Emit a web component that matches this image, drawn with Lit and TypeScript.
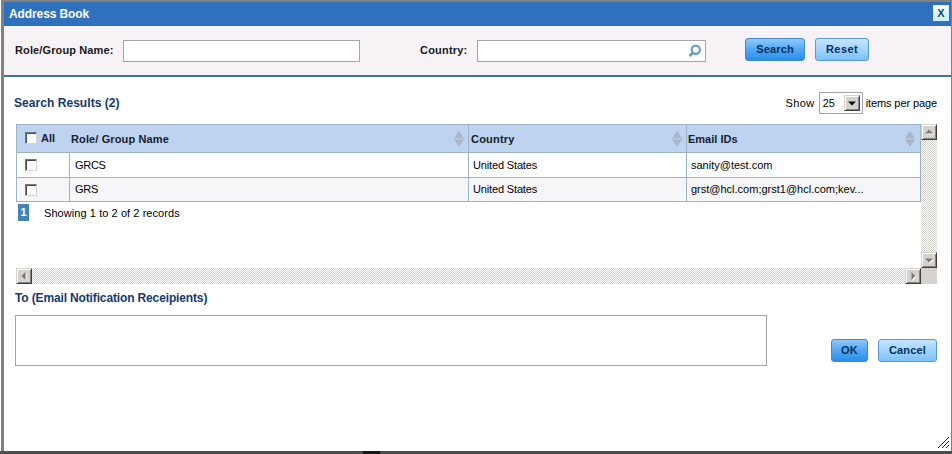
import { LitElement, html, css, svg } from "lit";
import { customElement, property } from "lit/decorators.js";

interface Row {
  name: string;
  country: string;
  email: string;
}

const ROWS: Row[] = [
  { name: "GRCS", country: "United States", email: "sanity@test.com" },
  { name: "GRS", country: "United States", email: "grst@hcl.com;grst1@hcl.com;kev..." },
];

const ARROWS: Record<string, string> = {
  up: "3.5,9 11.5,9 7.5,5",
  down: "3.5,6 11.5,6 7.5,10",
  left: "9,3.5 9,11.5 5,7.5",
  right: "6,3.5 6,11.5 10,7.5",
};

@customElement("scroll-arrow")
class ScrollArrow extends LitElement {
  @property() dir = "up";
  static styles = css`
    :host {
      display: block;
      flex: none;
      box-sizing: border-box;
      width: 16px;
      height: 16px;
      background: #d6d3ce;
      border: 1px solid;
      border-color: #d6d3ce #404040 #404040 #d6d3ce;
      box-shadow: inset 1px 1px #fff, inset -1px -1px #848284;
    }
    svg {
      display: block;
      width: 14px;
      height: 14px;
    }
    .lit { fill: #fff; }
    .face { fill: #7d7a78; }
  `;
  render() {
    return html`<svg viewBox="0.5 0.5 14 14">
      ${svg`<polygon class="lit" points=${ARROWS[this.dir]} transform="translate(1 1)"></polygon>
      <polygon class="face" points=${ARROWS[this.dir]}></polygon>`}
    </svg>`;
  }
}

@customElement("check-box")
class CheckBox extends LitElement {
  static styles = css`
    :host {
      display: block;
      flex: none;
      box-sizing: border-box;
      width: 12px;
      height: 12px;
      background: #fff;
      border: 1px solid;
      border-color: #7b7977 #d6d3ce #d6d3ce #7b7977;
      box-shadow: inset 1px 1px #4a4a4a;
    }
  `;
  render() {
    return html``;
  }
}

@customElement("app-root")
class AppRoot extends LitElement {
  static styles = css`
    :host {
      display: block;
      width: 952px;
      height: 454px;
      overflow: hidden;
      font: 11px/14px "Liberation Sans", Arial, sans-serif;
      color: #000;
      background: #fff;
      white-space: nowrap;
    }
    * { box-sizing: border-box; }
    .dialog {
      position: relative;
      height: 451px;
      margin-left: 1px;
      border: solid #808080;
      border-width: 2px 1px 0 3px;
      display: flex;
      flex-direction: column;
    }
    .title {
      height: 24px;
      flex: none;
      background: #3071be;
      color: #fff;
      font-weight: bold;
      font-size: 12px;
      display: flex;
      align-items: center;
      justify-content: space-between;
      padding: 0 2px 0 5px;
    }
    .title-text { letter-spacing: -0.1px; }
    .close {
      width: 16px;
      height: 16px;
      margin-bottom: 2px;
      background: linear-gradient(#fafdff, #c9ebf8);
      border: 1px solid #d3f0ff;
      color: #0b4f63;
      font-size: 11px;
      line-height: 15px;
      text-align: center;
    }
    .filters {
      height: 51px;
      flex: none;
      background: #f6f2f5;
      border-bottom: 2px solid #44719a;
      display: flex;
      align-items: center;
      padding: 0 0 0 11px;
      font-weight: bold;
      color: #1b191c;
    }
    .label { flex: none; padding-bottom: 2px; letter-spacing: 0.12px; }
    .role { width: 108px; }
    .country { width: 57px; margin-left: 60px; letter-spacing: 0.2px; }
    .input {
      width: 237px;
      height: 22px;
      background: #fff;
      border: 1px solid #a3a3b5;
      flex: none;
    }
    .lookup {
      width: 229px;
      display: flex;
      align-items: center;
      justify-content: flex-end;
      padding-right: 3px;
    }
    .glass { width: 14px; height: 14px; display: block; }
    .btn {
      flex: none;
      height: 23px;
      border: 1px solid #5a9bd0;
      border-radius: 3px;
      font-weight: bold;
      line-height: 21px;
      text-align: center;
      color: #02305f;
      background: linear-gradient(#c4e4ff, #a3d3ff 50%, #7cc0fc);
      letter-spacing: 0.15px;
    }
    .primary {
      border-color: #4489c7;
      background: linear-gradient(#8fc8fc, #53a7f3 50%, #2b8eea);
    }
    .search { width: 60px; margin: 0 10px 2px 39px; }
    .reset { width: 54px; margin-bottom: 2px; letter-spacing: 0.4px; }
    .ok { width: 37px; margin-right: 10px; }
    .cancel { width: 59px; }
    .body { padding: 15px 14px 0 12px; }
    .bar {
      height: 22px;
      display: flex;
      align-items: center;
      margin-left: -2px;
    }
    .heading { font-weight: bold; color: #14396f; font-size: 12px; }
    .h1 { flex: 1; padding-bottom: 1px; letter-spacing: 0.05px; }
    .show { letter-spacing: 0.4px; }
    .select {
      width: 44px;
      height: 22px;
      border: 1px solid #a3a3b5;
      margin: 0 3px 0 4px;
      padding: 0 2px 0 3px;
      display: flex;
      align-items: center;
      justify-content: space-between;
    }
    .per { letter-spacing: -0.1px; }
    .drop {
      width: 16px;
      height: 16px;
      border: 1px solid;
      border-color: #d6d3ce #404040 #404040 #d6d3ce;
      background: #d6d3ce;
      box-shadow: inset 1px 1px #fff, inset -1px -1px #848284;
      display: block;
    }
    .pane {
      margin-top: 10px;
      width: 921px;
      height: 160px;
      display: grid;
      grid-template: 144px 16px / 905px 16px;
    }
    .row {
      display: grid;
      grid-template-columns: 52px 399px 218px 234px;
      height: 24px;
      border: solid #9db3c6;
      border-width: 0 1px 1px 1px;
    }
    .row > div {
      display: flex;
      align-items: center;
      padding: 0 0 1px 5px;
      border-left: 1px solid #9db3c6;
    }
    .row > div:nth-child(2) { letter-spacing: -0.3px; }
    .row > div:nth-child(3) { padding-left: 4px; letter-spacing: -0.15px; }
    .row > div:first-child { border-left: 0; padding: 0 0 0 8px; }
    .row > .mail { padding-left: 4px; }
    .row.first { height: 25px; }
    .row.first > div { padding-bottom: 0; }
    .row.alt { background: #f6f6f8; }
    .row.head {
      height: 29px;
      border-top-width: 1px;
      background: #bdd3f0;
      font-weight: bold;
      color: #16202e;
    }
    .row.head > div { padding: 1px 4px 1px 2px; }
    .row.head > div:nth-child(2) { border-left-color: #bdd3f0; padding-left: 1px; letter-spacing: 0.12px; }
    .row.head > div:nth-child(3) { letter-spacing: 0.2px; }
    .row.head > .mail { padding-right: 5px; padding-left: 1px; }
    .row.head > div:first-child { padding: 0 0 1px 8px; gap: 4px; }
    .sort { width: 10px; height: 16px; display: block; margin: 1px 0 0 auto; }
    .pager { display: flex; align-items: center; padding: 2px 0 0 2px; letter-spacing: 0.07px; }
    .page {
      width: 11px;
      height: 17px;
      background: #4583b5;
      color: #fff;
      font-weight: bold;
      line-height: 17px;
      text-align: center;
      margin-right: 15px;
    }
    .track {
      display: flex;
      justify-content: space-between;
      background: repeating-conic-gradient(#d6d3ce 0 25%, #fff 0 50%) 0 0 / 2px 2px;
    }
    .vertical { flex-direction: column; }
    .corner { background: #d6d3ce; }
    .recipients { margin: 7px 0 10px -1px; letter-spacing: -0.14px; }
    .footer { display: flex; align-items: flex-end; margin-left: -1px; }
    .area {
      width: 752px;
      height: 51px;
      border: 1px solid #a3a3b0;
      margin-right: 64px;
    }
    .footer .btn { margin-bottom: 4px; }
    .grip {
      position: absolute;
      right: 1px;
      bottom: 2px;
      width: 13px;
      height: 13px;
    }
    .under { height: 3px; display: flex; background: linear-gradient(#4c4b4d 1px, #555356 2px, #3b393d); }
    .gap { width: 363px; }
    .dark { width: 17px; background: #161616; }
  `;

  private sort() {
    return html`<svg class="sort" viewBox="0 0 10 16">
      <path d="M0 7.5 5 0 10 7.5ZM0 8.5H10L5 16Z" fill="#a9b4c6"></path>
    </svg>`;
  }

  render() {
    return html`
      <div class="dialog">
        <div class="title"><span class="title-text">Address Book</span><div class="close">X</div></div>
        <div class="filters">
          <span class="label role">Role/Group Name:</span>
          <div class="input"></div>
          <span class="label country">Country:</span>
          <div class="input lookup">
            <svg class="glass" viewBox="0 0 14 14" fill="none" stroke="#6d9cc7">
              <circle cx="7.8" cy="5.7" r="4.1" stroke-width="2.2"></circle>
              <path d="M4.8 8.8 1.5 12" stroke-width="2.6"></path>
            </svg>
          </div>
          <div class="btn primary search">Search</div>
          <div class="btn reset">Reset</div>
        </div>
        <div class="body">
          <div class="bar">
            <span class="heading h1">Search Results (2)</span>
            <span class="show">Show</span>
            <div class="select">
              <span>25</span>
              <svg class="drop" viewBox="0 0 14 14"><path d="M3 5.5H11L7 9.5Z" fill="#000"></path></svg>
            </div>
            <span class="per">items per page</span>
          </div>
          <div class="pane">
            <div>
              <div class="row head">
                <div><check-box></check-box><span>All</span></div>
                <div>Role/ Group Name${this.sort()}</div>
                <div>Country${this.sort()}</div>
                <div class="mail">Email IDs${this.sort()}</div>
              </div>
              ${ROWS.map(
                (r, i) => html`<div class="row ${i % 2 ? "alt" : "first"}">
                  <div><check-box></check-box></div>
                  <div>${r.name}</div>
                  <div>${r.country}</div>
                  <div class="mail">${r.email}</div>
                </div>`
              )}
              <div class="pager"><span class="page">1</span><span>Showing 1 to 2 of 2 records</span></div>
            </div>
            <div class="track vertical">
              <scroll-arrow dir="up"></scroll-arrow><scroll-arrow dir="down"></scroll-arrow>
            </div>
            <div class="track">
              <scroll-arrow dir="left"></scroll-arrow><scroll-arrow dir="right"></scroll-arrow>
            </div>
            <div class="corner"></div>
          </div>
          <div class="heading recipients">To (Email Notification Receipients)</div>
          <div class="footer">
            <div class="area"></div>
            <div class="btn primary ok">OK</div>
            <div class="btn cancel">Cancel</div>
          </div>
        </div>
        <svg class="grip" viewBox="0 0 13 13" stroke="#222" stroke-width="1">
          <path d="M1 12 12 1M5 12 12 5M9 12 12 9"></path>
        </svg>
      </div>
      <div class="under"><div class="gap"></div><div class="dark"></div></div>
    `;
  }
}
